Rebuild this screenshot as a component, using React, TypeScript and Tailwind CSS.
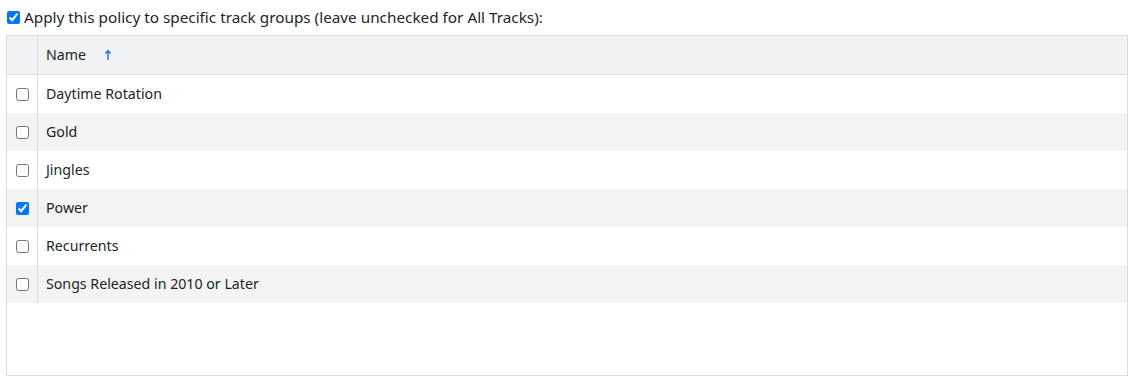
import { useState } from 'react'

const GROUPS = [
  'Daytime Rotation',
  'Gold',
  'Jingles',
  'Power',
  'Recurrents',
  'Songs Released in 2010 or Later',
]

export default function App() {
  const [specific, setSpecific] = useState(true)
  const [selected, setSelected] = useState<string[]>(['Power'])

  const toggle = (g: string) =>
    setSelected((prev) => (prev.includes(g) ? prev.filter((x) => x !== g) : [...prev, g]))

  return (
    <div
      className="w-[1133px] h-[382px] bg-white text-[14.2px] text-[#212529] pt-[6px]"
      style={{ fontFamily: '"Noto Sans", "Open Sans", sans-serif' }}
    >
      <label className="flex items-center h-[22px] pl-[7px] gap-[4px] text-[15.3px]">
        <input
          type="checkbox"
          checked={specific}
          onChange={(e) => setSpecific(e.target.checked)}
          className="w-[13px] h-[13px] m-0 accent-[#0075ff]"
        />
        <span>Apply this policy to specific track groups (leave unchecked for All Tracks):</span>
      </label>

      {/* Grid */}
      <div className="mt-[7px] ml-[6px] w-[1122px] h-[341px] border border-[#dddddd] bg-white">
        <div className="flex h-[39px] bg-[#f1f2f4] border-b border-[#dddddd]">
          <div className="w-[31px] border-r border-[#dddddd]" />
          <div className="flex items-center pl-[8px] gap-[18px]">
            <span>Name</span>
            <svg width="8" height="12" viewBox="0 0 8 12" className="text-[#1a73e8]">
              <path d="M4 11V2M1.5 4.5L4 1.5l2.5 3" fill="none" stroke="currentColor" strokeWidth="1.4" />
            </svg>
          </div>
        </div>
        {GROUPS.map((g, i) => (
          <div key={g} className={`flex h-[38px] ${i % 2 === 1 ? 'bg-[#f3f3f3]' : 'bg-white'}`}>
            <div className="w-[31px] border-r border-[#dddddd] flex items-center justify-center">
              <input
                type="checkbox"
                checked={selected.includes(g)}
                onChange={() => toggle(g)}
                className="w-[13px] h-[13px] m-0 accent-[#0075ff]"
              />
            </div>
            <div className="flex items-center pl-[8px]">{g}</div>
          </div>
        ))}
      </div>
    </div>
  )
}
